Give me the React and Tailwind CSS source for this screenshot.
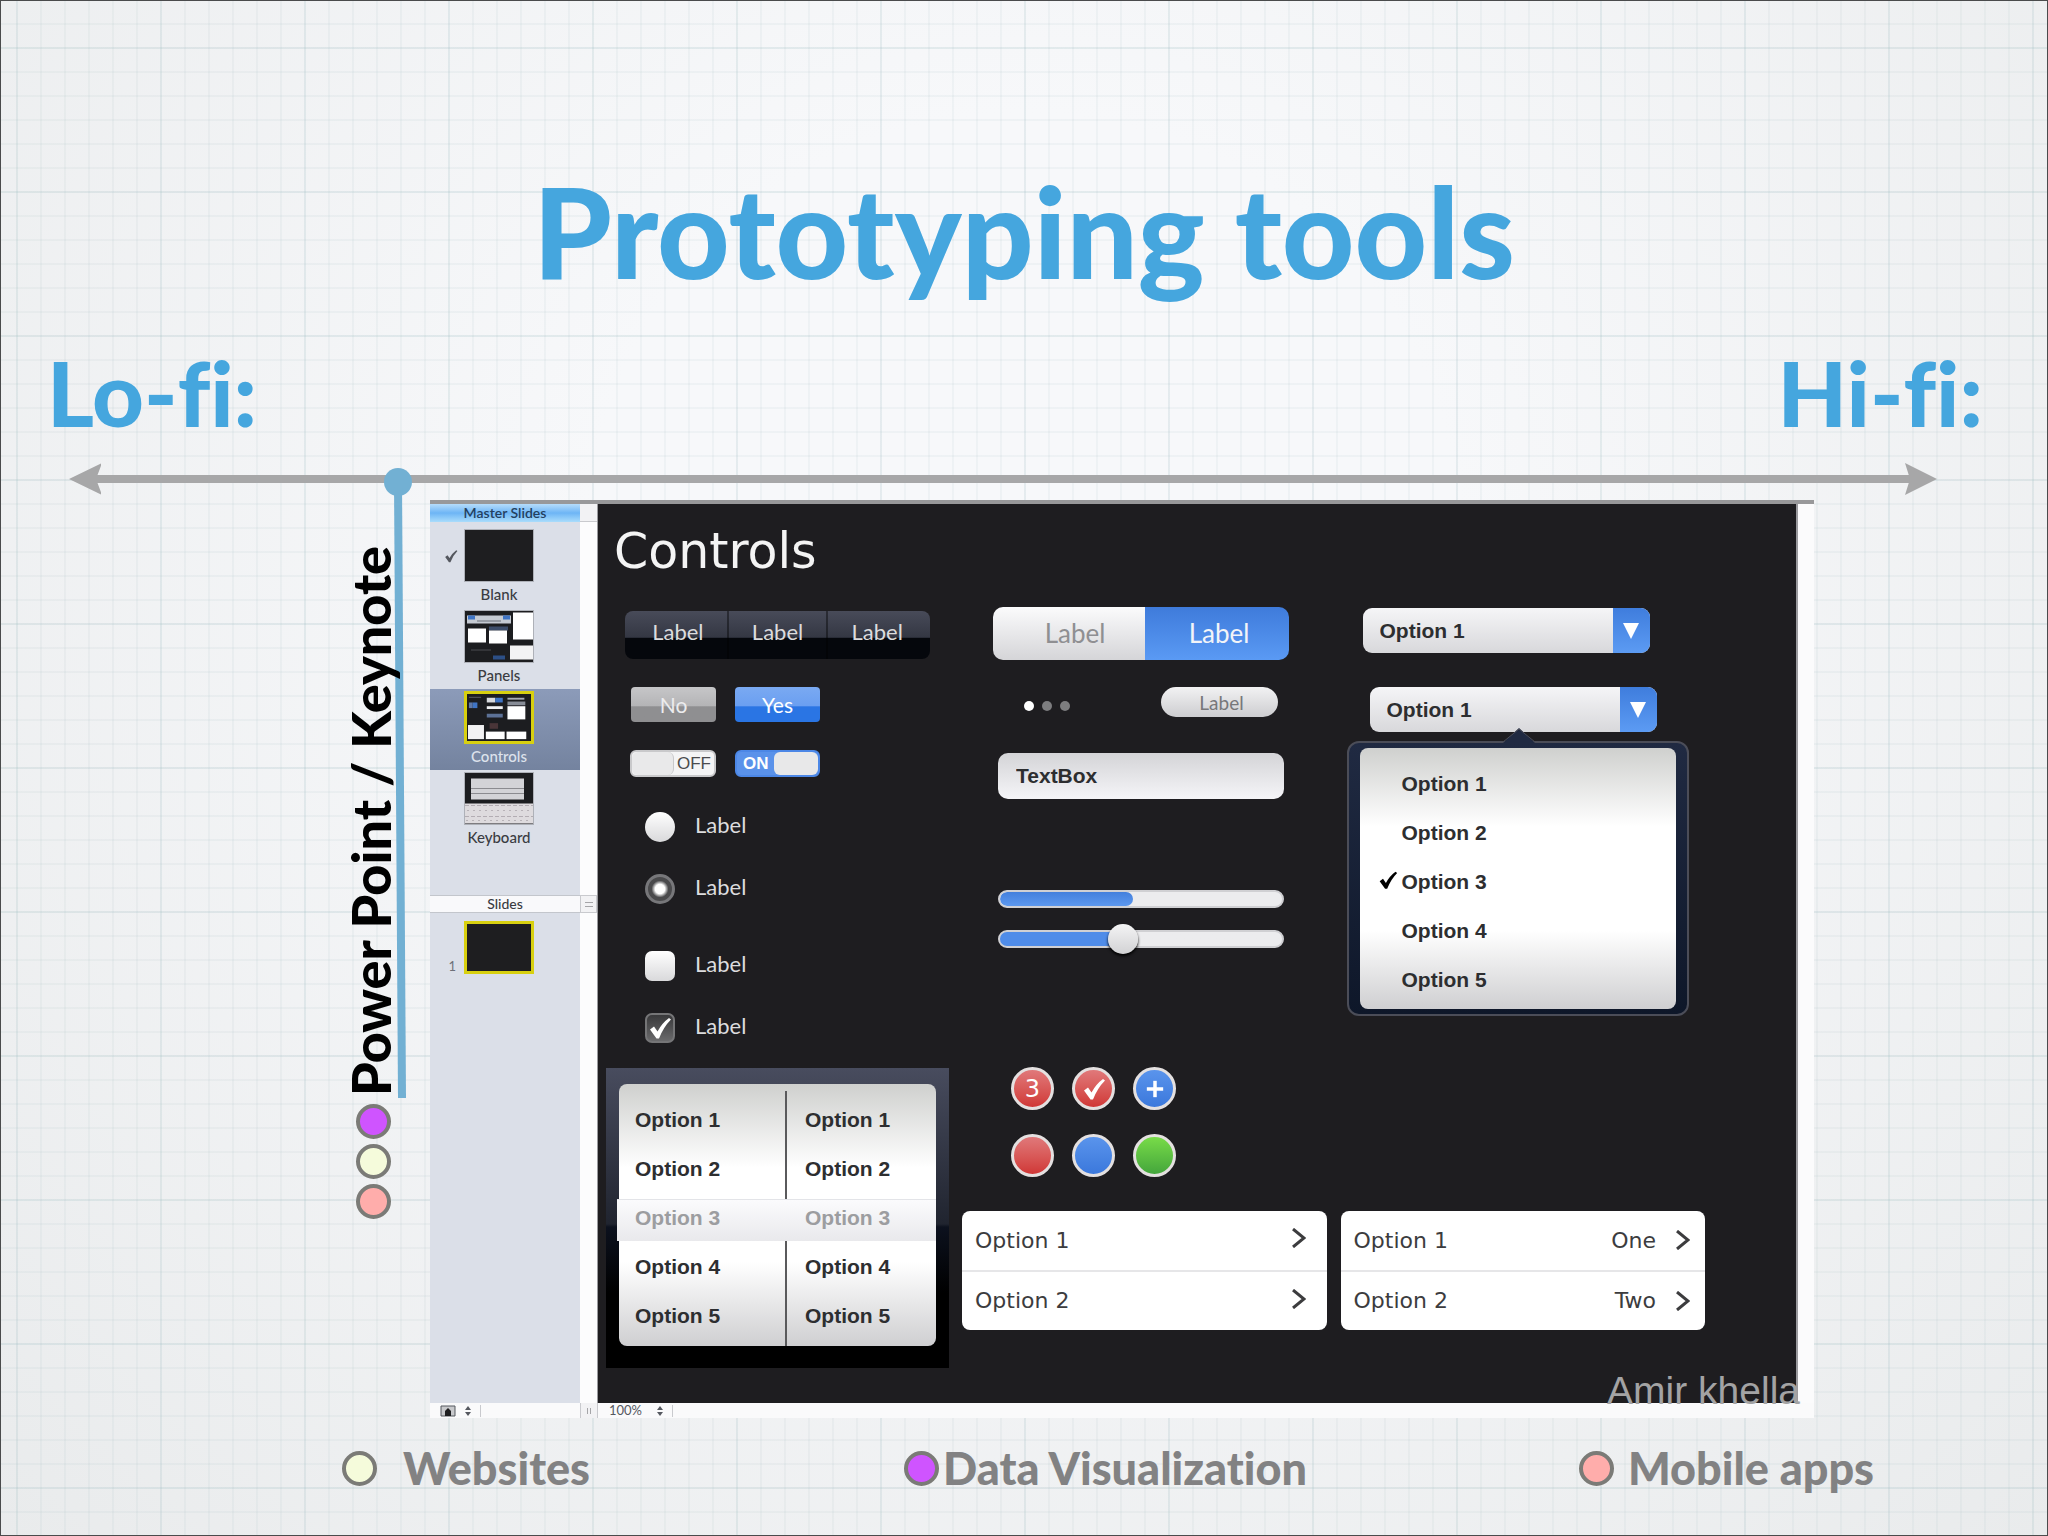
import React from "react";
import { Plus } from "lucide-react";

const marker = "font-['Lato',sans-serif] font-black [font-variant-ligatures:none]";
const arial = "font-['Liberation_Sans',sans-serif]";
const verdana = "font-['DejaVu_Sans',sans-serif]";
const lato = "font-['Lato',sans-serif]";

const options = ["Option 1", "Option 2", "Option 3", "Option 4", "Option 5"];

function Dot({ className }) {
  return <span className={`block h-[35px] w-[35px] shrink-0 rounded-full border-4 border-[#7b7b77] ${className}`} />;
}

function CheckMark({ className }) {
  return (
    <svg className={className} viewBox="0 0 24 24" fill="currentColor">
      <path d="M2 13.5 6 10.5 9.5 15.5Q14 7 21 2L23 3.5Q15.500 11 11 22.500H8.500Z" />
    </svg>
  );
}

function Axis() {
  return (
    <div className="flex items-center pl-[68px] pr-[110px]">
      <svg className="-mr-2 h-8 w-8 shrink-0" viewBox="0 0 32 32" fill="#a7a7a8">
        <path d="M0 16 33 0 27 16 33 32Z" />
      </svg>
      <div className="h-2 flex-1 bg-[#a7a7a8]" />
      <svg className="-ml-2 h-8 w-8 shrink-0" viewBox="0 0 32 32" fill="#a7a7a8">
        <path d="M32 16 0 0 5 16 0 32Z" />
      </svg>
    </div>
  );
}

function PanelsThumb() {
  return (
    <svg viewBox="0 0 68 50" className="h-full w-full">
      <rect width="68" height="50" fill="#1c1d20" />
      <rect x="2" y="4" width="44" height="8" fill="#c5cad2" />
      <rect x="3" y="4" width="7" height="4" fill="#3f74c4" />
      <rect x="38" y="4" width="7" height="4" fill="#3f74c4" />
      <rect x="12" y="9" width="24" height="1" fill="#6d717a" />
      <rect x="3" y="17" width="18" height="14" fill="#fff" />
      <rect x="24" y="15" width="19" height="4" fill="#3d4d6a" />
      <rect x="24" y="19" width="18" height="13" fill="#fff" />
      <rect x="48" y="1" width="20" height="27" fill="#fff" />
      <rect x="45" y="34" width="23" height="14" fill="#f3f3f4" />
      <rect x="28" y="44" width="12" height="4" fill="#2c4f86" />
      <rect x="6" y="38" width="20" height="1" fill="#4b4c50" />
    </svg>
  );
}

function ControlsThumb() {
  return (
    <svg viewBox="0 0 68 50" className="h-full w-full">
      <rect width="68" height="50" fill="#1c1d20" />
      <rect x="2" y="3" width="13" height="1" fill="#5d5f66" />
      <rect x="2" y="9" width="4" height="6" fill="#5f78a6" />
      <rect x="6" y="9" width="5" height="6" fill="#3f74c4" />
      <rect x="21" y="4" width="9" height="5" fill="#d7d9dd" />
      <rect x="30" y="4" width="8" height="5" fill="#3f74c4" />
      <rect x="21" y="13" width="17" height="3" fill="#f1f2f4" />
      <rect x="21" y="21" width="17" height="4" fill="#5c7196" />
      <rect x="43" y="4" width="18" height="2" fill="#a9adb6" />
      <rect x="43" y="8" width="19" height="4" fill="#878c96" />
      <rect x="43" y="13" width="19" height="14" fill="#fff" />
      <rect x="24" y="31" width="9" height="6" fill="#493538" />
      <rect x="1" y="33" width="17" height="15" fill="#f2f2f3" />
      <rect x="20" y="40" width="20" height="8" fill="#fff" />
      <rect x="42" y="40" width="21" height="8" fill="#fff" />
    </svg>
  );
}

function KeyboardThumb() {
  return (
    <svg viewBox="0 0 68 50" className="h-full w-full">
      <rect width="68" height="50" fill="#1c1d20" />
      <path d="M6 5H59V26H6Z" fill="#d3d3d7" />
      <path d="M6 15H59M6 20H59" stroke="#8b8b90" />
      <rect y="30" width="68" height="20" fill="#dedbde" />
      <path d="M0 32H68M0 43H68" stroke="#b3adb3" strokeDasharray="4 2" />
      <path d="M2 37H66M1 47H67" stroke="#b7b2b7" strokeDasharray="2 4" />
    </svg>
  );
}

function MasterSlide({ label, selected, checked, children }) {
  return (
    <li className={`relative flex h-[81px] flex-col items-center pr-[12px] ${selected ? "bg-linear-to-b from-[#8c9bb9] to-[#74839f] text-[#dde2ec]" : "text-[#3a3c42]"}`}>
      {checked && <CheckMark className="absolute top-[22px] left-[14px] h-[14px] w-[14px] text-[#55585f]" />}
      <div className={`mt-[2px] h-[53px] w-[70px] shrink-0 overflow-hidden bg-[#1e1e20] ${selected ? "border-[3px] border-[#d8d010]" : "border border-[#aeb1b8]"}`}>
        {children}
      </div>
      <span className={`${lato} mt-[3px] text-[15px] leading-[18px] font-medium`}>{label}</span>
    </li>
  );
}

function Sidebar() {
  return (
    <aside className="flex w-[150px] shrink-0 flex-col bg-[#dbdfe8]">
      <h3 className={`${lato} h-[18px] bg-linear-to-b from-[#b5dcfb] via-[#6db5f5] to-[#a9dcfb] text-center text-[14px] leading-[18px] font-semibold text-[#24405f]`}>
        Master Slides
      </h3>
      <ul className="mt-[5px]">
        <MasterSlide label="Blank" checked />
        <MasterSlide label="Panels"><PanelsThumb /></MasterSlide>
        <MasterSlide label="Controls" selected><ControlsThumb /></MasterSlide>
        <MasterSlide label="Keyboard"><KeyboardThumb /></MasterSlide>
      </ul>
      <h3 className={`${lato} mt-[44px] h-[18px] border-y border-[#c3c6cc] bg-[#f9f9fb] text-center text-[14px] leading-4 font-medium text-[#3a3c42]`}>
        Slides
      </h3>
      <div className="mt-2 flex items-end">
        <span className={`${lato} w-[34px] pr-2 text-right text-[13px] leading-4 text-[#6d7078]`}>1</span>
        <div className="h-[53px] w-[70px] border-[3px] border-[#d8d010] bg-[#1e1e20]" />
      </div>
    </aside>
  );
}

function ChoiceRow({ id, type, defaultChecked, className }) {
  const box =
    type === "radio"
      ? "rounded-full checked:border-[3px] checked:border-[#77777a] checked:bg-[radial-gradient(circle,#ffffff_0_28%,#4a4a4c_50%)]"
      : "rounded-[7px] checked:border-2 checked:border-[#757577] checked:bg-linear-to-b checked:from-[#39393b] checked:to-[#6a6a6c]";
  return (
    <div className={`ml-[39px] flex h-[30px] items-center gap-5 ${className}`}>
      <span className="relative flex h-[30px] w-[30px]">
        <input
          id={id}
          type={type}
          name={type === "radio" ? "choice" : id}
          defaultChecked={defaultChecked}
          className={`peer h-[30px] w-[30px] appearance-none bg-linear-to-b from-white to-[#d9d9db] ${box}`}
        />
        {type === "checkbox" && (
          <CheckMark className="pointer-events-none absolute inset-[3px] hidden h-6 w-6 text-white peer-checked:block" />
        )}
      </span>
      <label htmlFor={id} className={`${lato} pb-1 text-[22px] leading-[26px] text-[#dcdcde]`}>Label</label>
    </div>
  );
}

function Picker() {
  return (
    <div className="mt-[25px] h-[300px] w-[343px] bg-[linear-gradient(#484c5e,#20242f_52%,#0c111e_53%,#000000_75%)] px-[13px] pt-4">
      <div className="relative grid h-[262px] grid-cols-[166px_1fr] rounded-lg bg-[linear-gradient(#cfd0ce,#ffffff_32%,#ffffff_68%,#cfcfd1)] py-[11px]">
        <div className="absolute -left-[2px] right-0 top-[115px] h-[42px] border-t border-[#e3e4e8] bg-linear-to-b from-[#fbfbfd] to-[#e9e9ec]" />
        <div className="absolute top-[7px] left-[166px] h-[108px] w-[2px] bg-[#5a5a5c]" />
        <div className="absolute top-[157px] left-[166px] h-[105px] w-[2px] bg-[#5a5a5c]" />
        {[0, 1].map((col) => (
          <ul key={col} className={`${arial} relative ${col ? "pl-5" : "pl-4"} text-[21px] font-bold text-[#2d2e30]`}>
            {options.map((o, i) => (
              <li key={o} className={`h-[49px] leading-[49px] ${i === 2 ? "text-[#9c9da0]" : ""}`}>{o}</li>
            ))}
          </ul>
        ))}
      </div>
    </div>
  );
}

function SelectBox({ label, className }) {
  return (
    <div className={`relative h-[45px] w-[287px] ${className}`}>
      <select
        aria-label={label}
        className={`${arial} h-full w-full appearance-none rounded-[9px] bg-linear-to-b from-[#f5f5f7] to-[#d8d8db] pl-[17px] text-[21px] font-bold text-[#2d2e30]`}
      >
        {options.map((o) => <option key={o}>{o}</option>)}
      </select>
      <span className="pointer-events-none absolute inset-y-0 right-0 flex w-[37px] items-center justify-center rounded-r-[9px] bg-linear-to-b from-[#3f7ddd] to-[#5c9bf3]">
        <svg className="h-4 w-4" viewBox="0 0 16 16" fill="#fff"><path d="M0 0H16L8 16Z" /></svg>
      </span>
    </div>
  );
}

function OptionPopup() {
  return (
    <div className="relative mt-[9px] ml-[6px] h-[275px] w-[342px] rounded-xl border-2 border-[#4b4d58] bg-linear-to-b from-[#202a42] to-[#0e1729] px-[11px] py-[5px]">
      <svg className="absolute -top-[15px] left-[154px] h-4 w-8" viewBox="0 0 32 16">
        <path d="M0 15 16 0 32 15V16H0Z" fill="#202a42" />
        <path d="M0 14 16 1 32 14" fill="none" stroke="#4b4d58" />
      </svg>
      <ul className={`${arial} h-full rounded-lg bg-[linear-gradient(#cfd0ce,#ffffff_30%,#ffffff_70%,#cfcfd1)] pt-[11px] text-[21px] font-bold text-[#2d2e30]`}>
        {options.map((o, i) => (
          <li key={o} className="flex h-[49px] items-center">
            <span className="flex w-[42px] justify-end pr-1">{i === 2 && <CheckMark className="mb-1 h-5 w-5 text-black" />}</span>
            <button type="button">{o}</button>
          </li>
        ))}
      </ul>
    </div>
  );
}

function Badge({ children, className }) {
  return (
    <span className={`${verdana} flex h-[43px] w-[43px] items-center justify-center rounded-full border-[3px] border-[#e4e0e0] text-[24px] text-white ${className}`}>
      {children}
    </span>
  );
}

function OptionTable({ values }) {
  return (
    <table className={`${verdana} h-[119px] flex-1 rounded-lg bg-white text-[22px] text-[#3c3c3e]`}>
      <tbody>
        {values.map((value, i) => (
          <tr key={i}>
            <td className={`pl-[13px] ${i ? "" : "border-b-2 border-[#e6e6e8]"}`}>Option {i + 1}</td>
            <td className={`${i ? "" : "border-b-2 border-[#e6e6e8]"}`}>
              <span className={`flex items-center justify-end gap-5 ${value ? "pr-[15px]" : "pr-[21px] pb-1"}`}>
                {value}
                <svg className="h-5 w-[14px]" viewBox="0 0 14 20" fill="none" stroke="currentColor" strokeWidth="3">
                  <path d="M1 1 12 10 1 19" />
                </svg>
              </span>
            </td>
          </tr>
        ))}
      </tbody>
    </table>
  );
}

function LeftColumn() {
  return (
    <div className="w-[343px] shrink-0 pt-1">
      <div className={`${lato} ml-[19px] flex h-12 w-[305px] overflow-hidden rounded-lg bg-linear-to-b from-[#484b59] from-0% via-[#343743] via-55% to-[#05070c] to-56% text-[22px] text-[#dcdcde]`}>
        <button type="button" className="flex-1 border-r-2 border-black/40 pb-2 pl-1">Label</button>
        <button type="button" className="flex-1 border-r-2 border-black/40 pb-2">Label</button>
        <button type="button" className="flex-1 pr-1 pb-2">Label</button>
      </div>
      <div className={`${lato} mt-7 ml-[25px] flex gap-[19px] text-[21px] text-white`}>
        <button type="button" className="h-[35px] w-[85px] rounded-[4px] bg-linear-to-b from-[#c6c6c8] from-0% via-[#b4b4b6] via-55% to-[#8f8f91] to-56% text-[#ececee]">No</button>
        <button type="button" className="h-[35px] w-[85px] rounded-[4px] bg-linear-to-b from-[#7aa9f2] from-0% via-[#6a9ff1] via-55% to-[#2a75e4] to-56%">Yes</button>
      </div>
      <div className={`${arial} mt-7 ml-[24px] flex gap-[19px] text-[17px] font-bold`}>
        <button type="button" role="switch" aria-checked="false" className="flex h-[27px] w-[86px] items-center rounded-md border-2 border-[#c9c9cb] bg-[#f4f4f5] font-normal text-[#4b4b4d]">
          <span className="mr-[3px] h-full w-[42px] rounded-md border-r border-[#c9c9cb] bg-[#e9e9ea]" />
          OFF
        </button>
        <button type="button" role="switch" aria-checked="true" className="flex h-[27px] w-[85px] items-center justify-between rounded-md border-2 border-[#4c87e6] bg-[#5a92ea] pl-[6px] text-white">
          ON
          <span className="h-full w-[44px] rounded-md bg-[#e8e8e9]" />
        </button>
      </div>
      <ChoiceRow id="radio-a" type="radio" className="mt-[35px]" />
      <ChoiceRow id="radio-b" type="radio" defaultChecked className="mt-8" />
      <ChoiceRow id="check-a" type="checkbox" className="mt-[47px]" />
      <ChoiceRow id="check-b" type="checkbox" defaultChecked className="mt-8" />
      <Picker />
    </div>
  );
}

function MiddleColumn() {
  return (
    <div className="flex-1">
      <div className={`${lato} ml-[31px] flex h-[53px] w-[296px] overflow-hidden rounded-[10px] text-[26px]`}>
        <button type="button" className="w-[152px] bg-linear-to-b from-[#fbfbfc] to-[#d5d5d8] pl-3 text-[#8f8f92]">Label</button>
        <button type="button" className="flex-1 bg-linear-to-b from-[#3f7bdb] to-[#5a9af4] pl-1 text-[#f2f4f8]">Label</button>
      </div>
      <div className="mt-[27px] ml-[62px] flex h-[30px] items-center">
        <div className="flex gap-2 pt-2">
          <span className="h-[10px] w-[10px] rounded-full bg-white" />
          <span className="h-[10px] w-[10px] rounded-full bg-[#7d7d7f]" />
          <span className="h-[10px] w-[10px] rounded-full bg-[#7d7d7f]" />
        </div>
        <button type="button" className={`${lato} ml-[91px] h-[30px] w-[117px] rounded-full bg-linear-to-b from-[#f2f2f3] to-[#cdcdd0] pl-1 text-[19px] leading-none text-[#77777a]`}>Label</button>
      </div>
      <input
        aria-label="TextBox"
        defaultValue="TextBox"
        className={`${arial} mt-9 ml-9 block h-[46px] w-[286px] rounded-[10px] bg-linear-to-b from-[#d4d4d7] to-[#f5f5f8] px-[18px] text-[21px] font-bold text-[#2d2e30]`}
      />
      <div role="progressbar" aria-valuenow={47} className="mt-[91px] ml-9 h-[18px] w-[286px] overflow-hidden rounded-full border-2 border-[#d0d0d3] bg-[#ececee]">
        <div className="h-full w-[47%] rounded-full bg-linear-to-b from-[#4480dd] to-[#5c98ef]" />
      </div>
      <input
        type="range"
        aria-label="Amount"
        defaultValue={43}
        className="mt-[22px] ml-9 block h-[18px] w-[286px] appearance-none rounded-full border-2 border-[#d0d0d3] bg-linear-to-r from-[#4f8ce9] from-43% to-[#ececee] to-43% [&::-webkit-slider-thumb]:h-[30px] [&::-webkit-slider-thumb]:w-[30px] [&::-webkit-slider-thumb]:appearance-none [&::-webkit-slider-thumb]:rounded-full [&::-webkit-slider-thumb]:bg-linear-to-b [&::-webkit-slider-thumb]:from-[#f4f4f5] [&::-webkit-slider-thumb]:to-[#d2d2d4] [&::-webkit-slider-thumb]:shadow-[0_2px_3px_#000000]"
      />
      <div className="mt-[119px] ml-[49px] grid w-fit grid-cols-3 gap-x-[18px] gap-y-6">
        <Badge className="bg-linear-to-b from-[#e0787a] to-[#d03636]">3</Badge>
        <Badge className="bg-linear-to-b from-[#e0787a] to-[#d03636]"><CheckMark className="h-6 w-6" /></Badge>
        <Badge className="bg-linear-to-b from-[#5a94ec] to-[#3b78dc]"><Plus size={28} strokeWidth={3} strokeLinecap="butt" /></Badge>
        <Badge className="bg-linear-to-b from-[#e0787a] to-[#d03636]" />
        <Badge className="bg-linear-to-b from-[#5a94ec] to-[#3b78dc]" />
        <Badge className="bg-linear-to-b from-[#78dc48] to-[#44a63c]" />
      </div>
    </div>
  );
}

function ControlsSlide() {
  return (
    <main className="flex-1 bg-[#1e1d20] pb-[35px] pl-2">
      <h2 className={`${verdana} h-[103px] pt-[19px] pl-2 text-[49px] leading-[58px] text-[#f4f4f4]`}>Controls</h2>
      <div className="flex gap-[13px]">
        <LeftColumn />
        <div className="flex w-[743px] flex-col">
          <div className="flex gap-[14px]">
            <MiddleColumn />
            <div className="flex-1 pt-[1px]">
              <SelectBox label="First drop-down" className="ml-[22px]" />
              <SelectBox label="Second drop-down" className="mt-[34px] ml-[29px]" />
              <OptionPopup />
            </div>
          </div>
          <div className="mt-[34px] flex gap-[14px]">
            <OptionTable values={["", ""]} />
            <OptionTable values={["One", "Two"]} />
          </div>
        </div>
      </div>
    </main>
  );
}

function KeynoteWindow() {
  return (
    <div className="relative flex-1 border-t-4 border-[#98989a] bg-[#fbfbfc]">
      <div className="flex">
        <Sidebar />
        <div className="w-[18px] shrink-0 border-r border-[#9a9a9e] bg-[#fcfcfd]">
          <div className="h-[18px] border-b border-[#c9cace] bg-[#f2f2f4]" />
          <div className="mt-[373px] flex h-[18px] items-center justify-center border border-[#c9cace] bg-[#f2f2f4]">
            <span className="h-[5px] w-2 border-y border-[#a5a5a8]" />
          </div>
        </div>
        <ControlsSlide />
        <div className="w-[18px] shrink-0 border-l-2 border-[#9a9a9e]" />
      </div>
      <div className={`${lato} flex h-[15px] items-center bg-[#fafafb] text-[13px] leading-[15px] text-[#55585f]`}>
        <span className="flex w-[168px] items-center gap-2 pl-[10px]">
          <svg className="h-3 w-4" viewBox="0 0 16 12">
            <path d="M1 1H15V11H1Z" fill="#c8c9cc" stroke="#55585f" />
            <path d="M5 11V6L8 3 11 6V11Z" fill="#1e1e20" />
          </svg>
          <svg className="h-3 w-2" viewBox="0 0 8 12" fill="#55585f"><path d="M1 5 4 1 7 5ZM1 7H7L4 11Z" /></svg>
          <span className="h-3 w-px bg-[#c9cace]" />
          <span className="ml-auto flex h-[15px] w-[18px] items-center justify-center border-x border-[#c9cace] bg-[#f2f2f4]">
            <span className="h-[6px] w-1 border-x border-[#a5a5a8]" />
          </span>
        </span>
        <span className="pl-[11px]">100%</span>
        <svg className="ml-[14px] h-3 w-2" viewBox="0 0 8 12" fill="#55585f"><path d="M1 5 4 1 7 5ZM1 7H7L4 11Z" /></svg>
        <span className="ml-2 h-3 w-px bg-[#c9cace]" />
      </div>
      <span className={`${arial} absolute right-[14px] bottom-[5px] text-[39px] leading-[44px] text-[#a3a3a4]`}>Amir khella</span>
    </div>
  );
}

export default function App() {
  return (
    <div className="min-h-screen border border-[#4a4b4c] bg-[#f3f4f5] bg-[linear-gradient(#8fb5bb1f_2px,transparent_2px),linear-gradient(90deg,#8fb5bb1a_2px,transparent_2px),linear-gradient(#9fb9bd1a_2px,transparent_2px),linear-gradient(90deg,#9fb9bd1a_2px,transparent_2px),radial-gradient(ellipse_at_50%_35%,#f7f8fa_30%,#e9ebec_100%)] bg-size-[144px_144px,144px_144px,24px_24px,24px_24px,100%_100%] bg-position-[0_46px,15px_0,0_22px,15px_0,0_0]">
      <h1 className={`${marker} pt-[142px] text-center text-[126px] leading-[176px] text-[#45a6de]`}>Prototyping tools</h1>
      <div className={`${marker} mt-[13px] flex justify-between pr-[64px] pl-[46px] text-[90px] leading-[120px] text-[#45a6de]`}>
        <span>Lo-fi:</span>
        <span>Hi-fi:</span>
      </div>
      <div className="mt-[11px]">
        <Axis />
      </div>
      <div className="mt-[5px] flex pr-[233px]">
        <div className="relative w-[429px] shrink-0">
          <svg className="absolute -top-8 right-[16px] h-[630px] w-8" viewBox="0 0 32 630">
            <circle cx="16" cy="14" r="14" fill="#72b0d3" />
            <path d="M12 14H20L24 630H16Z" fill="#72b0d3" />
          </svg>
          <div className="relative mt-[46px] ml-[337px] flex w-[70px] flex-col items-center">
            <span className={`${marker} mr-1 rotate-180 text-[54px] leading-[64px] whitespace-nowrap text-black [writing-mode:vertical-rl]`}>
              Power Point / Keynote
            </span>
            <div className="mt-2 flex flex-col gap-[5px]">
              <Dot className="bg-[#cf54ff]" />
              <Dot className="bg-[#f5fbdb]" />
              <Dot className="bg-[#ffadab]" />
            </div>
          </div>
        </div>
        <KeynoteWindow />
      </div>
      <footer className={`${marker} mt-[20px] grid grid-cols-[562px_1fr_auto] items-center pr-[173px] pl-[341px] text-[45px] leading-[60px] text-[#828283]`}>
        <span className="flex items-center gap-[26px]"><Dot className="bg-[#f5fbdb]" />Websites</span>
        <span className="flex items-center gap-1"><Dot className="bg-[#cf54ff]" />Data Visualization</span>
        <span className="flex items-center gap-[14px]"><Dot className="bg-[#ffadab]" />Mobile apps</span>
      </footer>
    </div>
  );
}
